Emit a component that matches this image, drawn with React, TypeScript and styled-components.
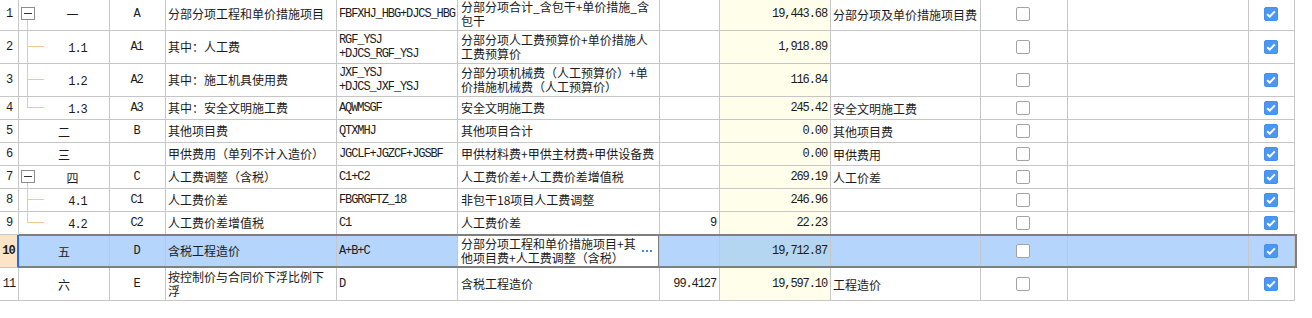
import React from "react";
import styled, { createGlobalStyle, css } from "styled-components";

const GlobalStyle = createGlobalStyle`
  html, body { margin: 0; padding: 0; background: #ffffff; }
  body {
    font-family: "Noto Sans CJK SC", "Noto Sans", sans-serif;
    font-size: 12px;
    color: #1b1b1b;
  }
  * { box-sizing: border-box; }
`;

const GRID = "#c6c6c6";
const YELLOW = "#fffeea";
const SEL = "#b5d5fc";
const SEL_YELLOW = "#b4d6f0";
const ORANGE = "#f8c88a";

const COLS = "19px 91px 56px 171px 121px 202px 60px 111px 150px 87px 181px 46px";

const Sheet = styled.div`
  width: 1312px;
  height: 318px;
  overflow: hidden;
  background: #fff;
`;

const Table = styled.div`
  display: flex;
  flex-direction: column;
  margin-top: -2px;
  width: 1295px;
`;

const Row = styled.div<{ $h: number; $sel?: boolean }>`
  display: grid;
  grid-template-columns: ${COLS};
  height: ${(p) => p.$h}px;
  ${(p) =>
    p.$sel &&
    css`
      position: relative;
      &::after {
        content: "";
        position: absolute;
        left: 19px;
        width: 1276px;
        top: -1px;
        bottom: 0;
        border: 2px solid #7f7f7f;
        border-left: none;
        pointer-events: none;
      }
    `}
`;

type Align = "left" | "center" | "right";

const Cell = styled.div<{ $align?: Align; $bg?: string; $pl?: number }>`
  display: flex;
  align-items: center;
  justify-content: ${(p) =>
    p.$align === "center" ? "center" : p.$align === "right" ? "flex-end" : "flex-start"};
  padding: 0 ${(p) => (p.$align === "right" ? "3px" : "2px")} 0
    ${(p) => (p.$align === "left" ? `${p.$pl ?? 2}px` : "0")};
  border-right: 1px solid ${GRID};
  border-bottom: 1px solid ${GRID};
  background: ${(p) => p.$bg || "transparent"};
  overflow: hidden;
  white-space: nowrap;
  min-width: 0;
`;

const NumCell = styled(Cell)<{ $sel?: boolean }>`
  justify-content: center;
  padding: 0;
  font-family: "Liberation Mono", monospace;
  font-size: 12px;
  letter-spacing: -1px;
  ${(p) =>
    p.$sel &&
    css`
      background: #fde4c6;
      font-weight: bold;
      border-right: 2px solid #1d6fe8;
    `}
`;

const TreeCell = styled(Cell)`
  padding: 0;
  justify-content: flex-start;
`;

const TreeLabel = styled.div`
  flex: 1;
  text-align: center;
`;

const EditCell = styled(Cell)`
  position: relative;
  background: #fff;
  &::before {
    content: "";
    position: absolute;
    left: -2px;
    right: -1px;
    top: 0;
    bottom: 0;
    border-left: 2px solid #7f7f7f;
    border-right: 2px solid #7f7f7f;
    pointer-events: none;
  }
`;

const Mono = styled.span`
  font-family: "Liberation Mono", monospace;
  font-size: 12px;
  letter-spacing: -1.1px;
`;

const Lines = styled.div`
  display: flex;
  flex-direction: column;
  line-height: 14px;
`;

const Dots = styled.span`
  display: flex;
  gap: 2px;
  margin-left: auto;
  margin-right: 5px;
  align-self: center;
  & > i {
    display: block;
    width: 2px;
    height: 2px;
    background: #3f8fd8;
  }
`;

const Box = styled.span<{ $checked?: boolean }>`
  display: inline-flex;
  align-items: center;
  justify-content: center;
  width: 14px;
  height: 14px;
  border-radius: 2px;
  ${(p) =>
    p.$checked
      ? css`
          background: #4a98f3;
          border: 1px solid #4490ee;
        `
      : css`
          background: #fff;
          border: 1px solid #a3a3a3;
        `}
`;

const Check: React.FC<{ checked?: boolean }> = ({ checked }) => (
  <Box $checked={checked}>
    {checked && (
      <svg width="10" height="8" viewBox="0 0 10 8">
        <path d="M1.2 4.2 L3.8 6.6 L8.8 1.4" fill="none" stroke="#fff" strokeWidth="2" />
      </svg>
    )}
  </Box>
);

type Tree = "box" | "child" | "last" | "none";

const TreeGlyph: React.FC<{ kind: Tree; h: number }> = ({ kind, h }) => {
  if (kind === "none") return null;
  const mid = Math.floor(h / 2) - 1;
  if (kind === "box") {
    const top = mid - 6;
    return (
      <svg width="17" height={h} viewBox={`0 0 17 ${h}`} style={{ display: "block", flex: "none" }}>
        <line x1="8.5" y1={top + 13} x2="8.5" y2={h} stroke={ORANGE} strokeWidth="1" />
        <rect x="2.5" y={top + 0.5} width="13" height="12" fill="#fff" stroke="#8c8c8c" />
        <line x1="5" y1={top + 6.5} x2="13" y2={top + 6.5} stroke="#333" strokeWidth="1" />
      </svg>
    );
  }
  return (
    <svg width="27" height={h} viewBox={`0 0 27 ${h}`} style={{ display: "block", flex: "none" }}>
      <line x1="8.5" y1="0" x2="8.5" y2={kind === "last" ? mid + 1 : h} stroke={ORANGE} strokeWidth="1" />
      <line x1="8" y1={mid + 0.5} x2="25" y2={mid + 0.5} stroke={ORANGE} strokeWidth="1" />
    </svg>
  );
};

type RowData = {
  n: string;
  tree: Tree;
  seq: string;
  seqMono?: boolean;
  code: string;
  name: string[];
  formula: string[];
  desc: string[];
  rate: string;
  amount: string;
  type: string;
  h: number;
  sel?: boolean;
};

const rows: RowData[] = [
  { n: "1", tree: "box", seq: "一", code: "A", name: ["分部分项工程和单价措施项目"], formula: ["FBFXHJ_HBG+DJCS_HBG"], desc: ["分部分项合计_含包干+单价措施_含", "包干"], rate: "", amount: "19,443.68", type: "分部分项及单价措施项目费", h: 33 },
  { n: "2", tree: "child", seq: "1.1", seqMono: true, code: "A1", name: ["其中：人工费"], formula: ["RGF_YSJ", "+DJCS_RGF_YSJ"], desc: ["分部分项人工费预算价+单价措施人", "工费预算价"], rate: "", amount: "1,918.89", type: "", h: 33 },
  { n: "3", tree: "child", seq: "1.2", seqMono: true, code: "A2", name: ["其中：施工机具使用费"], formula: ["JXF_YSJ", "+DJCS_JXF_YSJ"], desc: ["分部分项机械费（人工预算价）+单", "价措施机械费（人工预算价）"], rate: "", amount: "116.84", type: "", h: 33 },
  { n: "4", tree: "last", seq: "1.3", seqMono: true, code: "A3", name: ["其中：安全文明施工费"], formula: ["AQWMSGF"], desc: ["安全文明施工费"], rate: "", amount: "245.42", type: "安全文明施工费", h: 23 },
  { n: "5", tree: "none", seq: "二", code: "B", name: ["其他项目费"], formula: ["QTXMHJ"], desc: ["其他项目合计"], rate: "", amount: "0.00", type: "其他项目费", h: 23 },
  { n: "6", tree: "none", seq: "三", code: "", name: ["甲供费用（单列不计入造价）"], formula: ["JGCLF+JGZCF+JGSBF"], desc: ["甲供材料费+甲供主材费+甲供设备费"], rate: "", amount: "0.00", type: "甲供费用", h: 23 },
  { n: "7", tree: "box", seq: "四", code: "C", name: ["人工费调整（含税）"], formula: ["C1+C2"], desc: ["人工费价差+人工费价差增值税"], rate: "", amount: "269.19", type: "人工价差", h: 23 },
  { n: "8", tree: "child", seq: "4.1", seqMono: true, code: "C1", name: ["人工费价差"], formula: ["FBGRGFTZ_18"], desc: ["非包干18项目人工费调整"], rate: "", amount: "246.96", type: "", h: 23 },
  { n: "9", tree: "last", seq: "4.2", seqMono: true, code: "C2", name: ["人工费价差增值税"], formula: ["C1"], desc: ["人工费价差"], rate: "9", amount: "22.23", type: "", h: 23 },
  { n: "10", tree: "none", seq: "五", code: "D", name: ["含税工程造价"], formula: ["A+B+C"], desc: ["分部分项工程和单价措施项目+其", "他项目费+人工费调整（含税）"], rate: "", amount: "19,712.87", type: "", h: 33, sel: true },
  { n: "11", tree: "none", seq: "六", code: "E", name: ["按控制价与合同价下浮比例下", "浮"], formula: ["D"], desc: ["含税工程造价"], rate: "99.4127", amount: "19,597.10", type: "工程造价", h: 33 },
];

const TextLines: React.FC<{ lines: string[]; mono?: boolean }> = ({ lines, mono }) => (
  <Lines>
    {lines.map((l, i) => (mono ? <Mono key={i}>{l}</Mono> : <span key={i}>{l}</span>))}
  </Lines>
);

export default function App() {
  return (
    <>
      <GlobalStyle />
      <Sheet>
        <Table>
          {rows.map((r) => {
            const bg = r.sel ? SEL : undefined;
            return (
              <Row key={r.n} $h={r.h} $sel={r.sel}>
                <NumCell $sel={r.sel}>{r.n}</NumCell>
                <TreeCell $bg={bg}>
                  <TreeGlyph kind={r.tree} h={r.h - 1} />
                  <TreeLabel>{r.seqMono ? <Mono>{r.seq}</Mono> : r.seq}</TreeLabel>
                </TreeCell>
                <Cell $align="center" $bg={bg}>
                  <Mono>{r.code}</Mono>
                </Cell>
                <Cell $align="left" $bg={bg}>
                  <TextLines lines={r.name} />
                </Cell>
                <Cell $align="left" $bg={bg}>
                  <TextLines lines={r.formula} mono />
                </Cell>
                {r.sel ? (
                  <EditCell $align="left" $pl={3}>
                    <TextLines lines={r.desc} />
                    <Dots>
                      <i />
                      <i />
                      <i />
                    </Dots>
                  </EditCell>
                ) : (
                  <Cell $align="left" $bg={bg} $pl={3}>
                    <TextLines lines={r.desc} />
                  </Cell>
                )}
                <Cell $align="right" $bg={bg}>
                  <Mono>{r.rate}</Mono>
                </Cell>
                <Cell $align="right" $bg={r.sel ? SEL_YELLOW : YELLOW}>
                  <Mono>{r.amount}</Mono>
                </Cell>
                <Cell $align="left" $bg={bg}>
                  {r.type}
                </Cell>
                <Cell $align="center" $bg={bg}>
                  <Check />
                </Cell>
                <Cell $align="center" $bg={bg} />
                <Cell $align="center" $bg={bg}>
                  <Check checked />
                </Cell>
              </Row>
            );
          })}
        </Table>
      </Sheet>
    </>
  );
}
